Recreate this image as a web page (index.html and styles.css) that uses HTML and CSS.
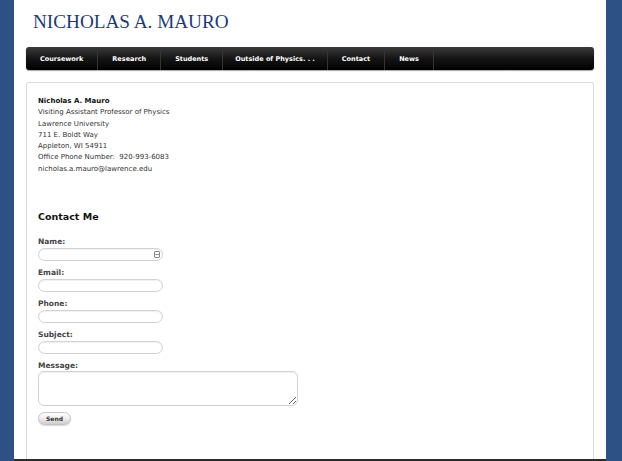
FILE: index.html
```html
<!DOCTYPE html>
<html>
<head>
<meta charset="utf-8">
<title>Nicholas A. Mauro - Contact</title>
<link rel="stylesheet" href="styles.css">
</head>
<body>
<div class="page">
  <header class="header">
    <h1 class="site-title">NICHOLAS A. MAURO</h1>
  </header>
  <nav class="nav">
    <a class="nav-item" href="#">Coursework</a>
    <a class="nav-item" href="#">Research</a>
    <a class="nav-item" href="#">Students</a>
    <a class="nav-item nav-item-long" href="#">Outside of Physics. . .</a>
    <a class="nav-item" href="#">Contact</a>
    <a class="nav-item" href="#">News</a>
  </nav>
  <main class="content">
    <div class="info">
      <div class="info-name">Nicholas A. Mauro</div>
      <div>Visiting Assistant Professor of Physics</div>
      <div>Lawrence University</div>
      <div>711 E. Boldt Way</div>
      <div>Appleton, WI 54911</div>
      <div>Office Phone Number:&nbsp; 920-993-6083</div>
      <div>nicholas.a.mauro@lawrence.edu</div>
    </div>
    <h2 class="contact-title">Contact Me</h2>
    <form class="form">
      <label class="field-label">Name:</label>
      <span class="input-wrap"><input class="field" type="text"><span class="autofill"></span></span>
      <label class="field-label">Email:</label>
      <input class="field" type="text">
      <label class="field-label">Phone:</label>
      <input class="field" type="text">
      <label class="field-label">Subject:</label>
      <input class="field" type="text">
      <label class="field-label">Message:</label>
      <textarea class="message"></textarea>
      <button class="send" type="button">Send</button>
    </form>
  </main>
</div>
</body>
</html>
```
FILE: styles.css
```css
html, body {
  margin: 0;
  padding: 0;
}
body {
  background: #2d5185;
  font-family: "DejaVu Sans", Verdana, sans-serif;
  color: #333;
}
.page {
  width: 568px;
  margin-left: 14px;
  height: 459px;
  padding: 0 12px;
  background: #fff;
  border-bottom: 2px solid #2a2a2a;
  overflow: hidden;
  display: flex;
  flex-direction: column;
}
.header {
  height: 47px;
  flex-shrink: 0;
  padding-left: 7px;
}
.site-title {
  margin: 0;
  padding-top: 12px;
  font-family: "Liberation Serif", "Times New Roman", serif;
  font-weight: normal;
  font-size: 19.2px;
  line-height: 20px;
  color: #1d3a78;
}
.nav {
  height: 23px;
  display: flex;
  border-radius: 3px;
  background: linear-gradient(#3b3b3b, #151515 50%, #000);
  box-shadow: 0 1px 1px rgba(0,0,0,0.35);
  flex-shrink: 0;
}
.nav-item {
  display: flex;
  align-items: center;
  padding: 0 14px;
  border-right: 1px solid #343434;
  color: #fff;
  text-decoration: none;
  font-weight: bold;
  font-size: 6.5px;
}
.nav-item-long {
  padding: 0 12px;
}
.content {
  margin-top: 12px;
  border: 1px solid #dcdcdc;
  border-bottom: none;
  border-radius: 3px 3px 0 0;
  padding: 13px 11px 11px;
  flex: 1;
}
.info {
  font-size: 7px;
  line-height: 11.25px;
  color: #333;
}
.info-name {
  font-weight: bold;
  color: #111;
}
.contact-title {
  margin: 36px 0 0;
  font-size: 9.5px;
  line-height: 12px;
  color: #111;
}
.form {
  margin-top: 13px;
  display: flex;
  flex-direction: column;
  align-items: flex-start;
}
.field-label {
  font-size: 7.5px;
  font-weight: bold;
  line-height: 12px;
  color: #444;
}
.field-label + .field,
.field-label + .input-wrap {
  margin-bottom: 6px;
}
.input-wrap {
  position: relative;
  display: block;
}
.field {
  display: block;
  box-sizing: border-box;
  width: 125px;
  height: 13px;
  margin: 0;
  padding: 0 6px;
  border: 1px solid #d2d2d2;
  border-radius: 7px;
  background: #fff;
  box-shadow: inset 0 1px 1px rgba(0,0,0,0.06);
  outline: none;
}
.autofill {
  position: absolute;
  right: 3px;
  top: 3px;
  width: 4px;
  height: 5px;
  border: 1px solid #888;
  border-radius: 1px;
  background: linear-gradient(#fff 40%, #999 40%, #999 60%, #fff 60%);
}
.message {
  display: block;
  box-sizing: border-box;
  width: 260px;
  height: 35px;
  margin: -1px 0 6px;
  border: 1px solid #d2d2d2;
  border-radius: 6px;
  box-shadow: inset 0 1px 1px rgba(0,0,0,0.06);
  resize: both;
  outline: none;
}
.send {
  box-sizing: border-box;
  width: 33px;
  height: 13px;
  margin: 0;
  padding: 0;
  border: 1px solid #c4c4c4;
  border-radius: 7px;
  background: linear-gradient(#ffffff, #f0f0f0 45%, #cdcdcd);
  font-family: "DejaVu Sans", Verdana, sans-serif;
  font-size: 6px;
  font-weight: bold;
  color: #333;
  box-shadow: 0 1px 1px rgba(0,0,0,0.15);
}
```
